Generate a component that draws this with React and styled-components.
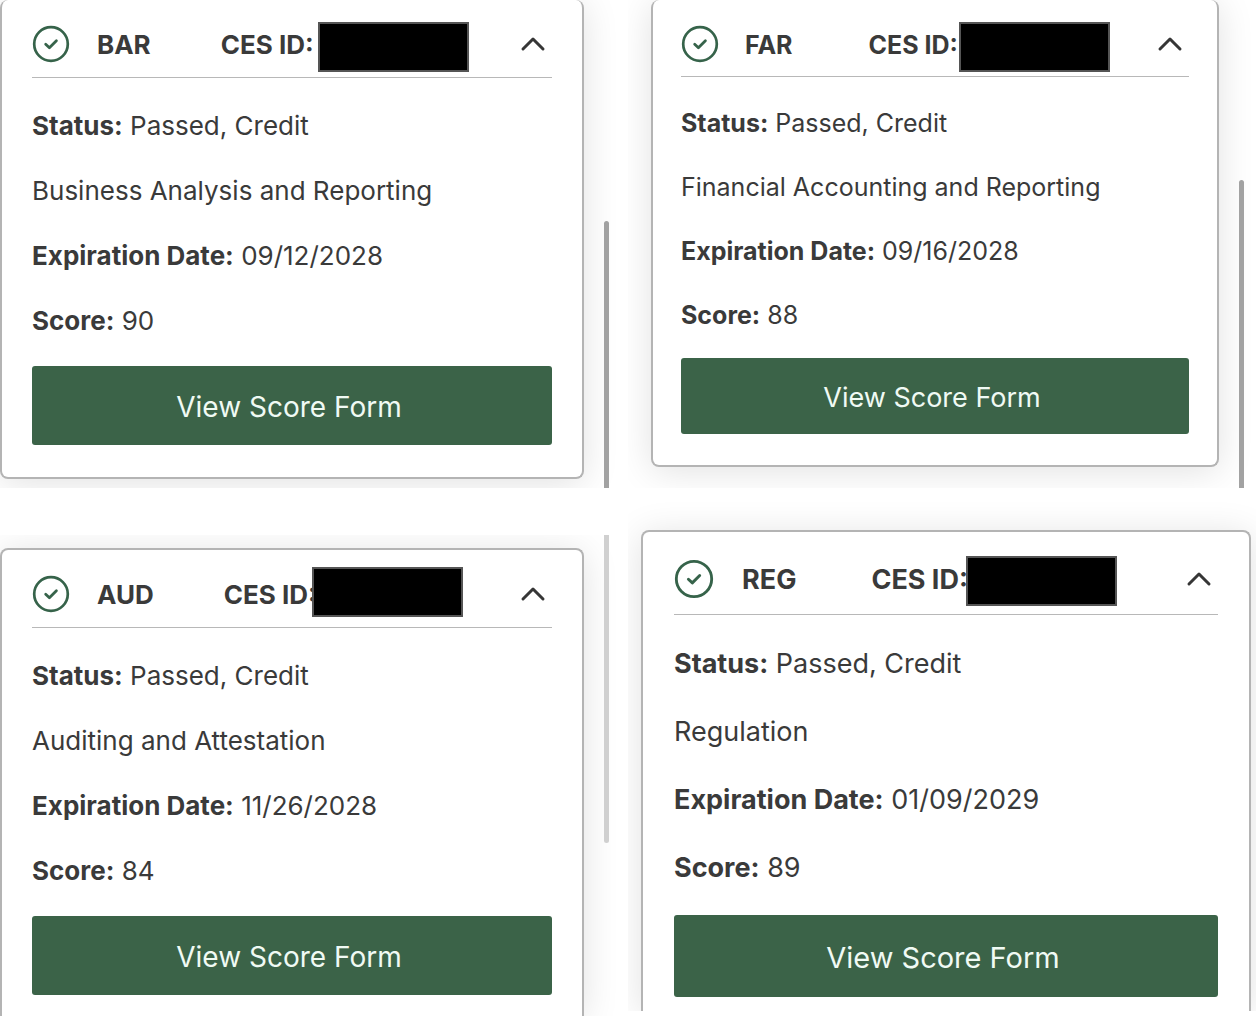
import React, { useState } from "react";
import styled, { createGlobalStyle } from "styled-components";

const GlobalStyle = createGlobalStyle`
  * {
    box-sizing: border-box;
  }

  body {
    margin: 0;
    background: #ffffff;
    color: #3a3a3a;
    font-family: Inter, "Liberation Sans", sans-serif;
  }
`;

// --- Card sizes ---
const sizes = {
  sm: {
    font: 25, line: 38, gap: 26, padX: 28, icon: 38, iconGap: 26, idGap: 76,
    headTop: 25, headBottom: 13, bodyTop: 27, buttonGap: 24, button: 76, buttonFont: 27, bottom: 31,
  },
  md: {
    font: 26, line: 39, gap: 26, padX: 30, icon: 38, iconGap: 27, idGap: 70,
    headTop: 25, headBottom: 14, bodyTop: 28, buttonGap: 26, button: 79, buttonFont: 28, bottom: 32,
  },
  lg: {
    font: 27, line: 41, gap: 27, padX: 31, icon: 40, iconGap: 28, idGap: 75,
    headTop: 27, headBottom: 15, bodyTop: 28, buttonGap: 27, button: 82, buttonFont: 29, bottom: 33,
  },
};

// --- Styled Components ---
const Page = styled.main`
  display: grid;
  grid-template-columns: 1fr 1fr;
  height: 100vh;
  min-height: 1016px;
  overflow: hidden;
`;

const Column = styled.div`
  display: flex;
  flex-direction: column;
  gap: ${(props) => props.$gap}px;
  min-width: 0;
  padding-bottom: ${(props) => props.$bottom || 0}px;
`;

const Pane = styled.section`
  display: flex;
  gap: 20px;
  flex: ${(props) => (props.$grow ? "1 1 0" : "none")};
  min-height: 0;
  overflow: hidden;
  padding: ${(props) => props.$padding};
`;

const Card = styled.article`
  flex: 1;
  min-width: 0;
  padding: 0 ${(props) => props.$size.padX}px;
  padding-bottom: ${(props) => props.$size.bottom}px;
  background: #ffffff;
  border: 2px solid #b4b4b4;
  border-radius: 8px;
  box-shadow: 0 4px 36px rgba(0, 0, 0, 0.12);
  font-size: ${(props) => props.$size.font}px;
  line-height: ${(props) => props.$size.line}px;

  ${(props) => props.$open === "top" && "border-top: 0;"}
  ${(props) =>
    props.$open === "bottom" &&
    "border-bottom: 0; border-bottom-left-radius: 0; border-bottom-right-radius: 0;"}
`;

const CardHeader = styled.header`
  position: relative;
  display: flex;
  align-items: center;
  padding-top: ${(props) => props.$size.headTop}px;
  padding-bottom: ${(props) => props.$size.headBottom}px;
  border-bottom: 1px solid #b8b8b8;
`;

const PassedIcon = styled.svg`
  flex: none;
  width: ${(props) => props.$size.icon}px;
  height: ${(props) => props.$size.icon}px;
  margin-right: ${(props) => props.$size.iconGap}px;
  fill: none;
  stroke: #36634a;
  stroke-linecap: round;
  stroke-linejoin: round;
`;

const Code = styled.h2`
  margin: 0;
  margin-right: ${(props) => props.$size.idGap}px;
  padding-top: 2px;
  font-size: inherit;
  font-weight: 650;
  line-height: 36px;
`;

const CesId = styled.span`
  padding-top: 2px;
  font-weight: 650;
  line-height: 36px;
  white-space: nowrap;
`;

/* Covers the candidate number, sits over the label */
const Redaction = styled.span`
  position: absolute;
  left: ${(props) => props.$left}px;
  top: ${(props) => props.$top}px;
  width: 151px;
  height: 50px;
  background: #000000;
  border: 2px solid #555555;
`;

const Toggle = styled.button`
  display: flex;
  margin-left: auto;
  padding: 6px;
  border: 0;
  background: none;
  cursor: pointer;

  svg {
    width: 26px;
    height: 16px;
    fill: none;
    stroke: #363636;
    stroke-width: 3;
    stroke-linecap: round;
    stroke-linejoin: round;
    transform: ${(props) => (props.$open ? "none" : "rotate(180deg)")};
  }
`;

const Details = styled.div`
  display: flex;
  flex-direction: column;
  gap: ${(props) => props.$size.gap}px;
  padding-top: ${(props) => props.$size.bodyTop}px;
`;

const Line = styled.p`
  margin: 0;

  strong {
    font-weight: 650;
  }
`;

const ScoreButton = styled.button`
  display: block;
  width: 100%;
  height: ${(props) => props.$size.button}px;
  margin-top: ${(props) => props.$size.buttonGap}px;
  padding: 2px 6px 0 0;
  border: 0;
  border-radius: 3px;
  background: #3b6348;
  color: #f0faf4;
  font-family: inherit;
  font-size: ${(props) => props.$size.buttonFont}px;
  cursor: pointer;
`;

const Thumb = styled.div`
  flex: none;
  width: 5px;
  height: ${(props) => props.$height}px;
  align-self: ${(props) => (props.$end ? "flex-end" : "flex-start")};
  background: ${(props) => (props.$end ? "#a2a2a2" : "#d0d0d0")};
  border-radius: ${(props) => (props.$end ? "3px 3px 0 0" : "0 0 3px 3px")};
`;

/* Runs the thumb down to the edge of the pane */
const Track = styled.div`
  display: flex;
  flex: none;
  margin-top: -${(props) => props.$top || 0}px;
  margin-bottom: -${(props) => props.$bottom || 0}px;
`;

// --- Score card ---
function ScoreCard({ exam, size, open }) {
  const [expanded, setExpanded] = useState(true);
  const s = sizes[size];

  return (
    <Card $size={s} $open={open}>
      <CardHeader $size={s}>
        <PassedIcon $size={s} viewBox="0 0 38 38" aria-hidden="true">
          <circle cx="19" cy="19" r="16.8" strokeWidth="2.7" />
          <path d="M13.7 19.2l3.7 3.5 7-7" strokeWidth="2.8" />
        </PassedIcon>
        <Code $size={s}>{exam.code}</Code>
        <CesId>CES ID:</CesId>
        <Redaction $left={exam.mark[0]} $top={exam.mark[1]} />
        <Toggle
          type="button"
          $open={expanded}
          aria-expanded={expanded}
          aria-label={`Toggle ${exam.code}`}
          onClick={() => setExpanded(!expanded)}
        >
          <svg viewBox="0 0 26 16">
            <path d="M3 13L13 3l10 10" />
          </svg>
        </Toggle>
      </CardHeader>
      {expanded && (
        <>
          <Details $size={s}>
            <Line>
              <strong>Status:</strong> Passed, Credit
            </Line>
            <Line>{exam.name}</Line>
            <Line>
              <strong>Expiration Date:</strong> {exam.expires}
            </Line>
            <Line>
              <strong>Score:</strong> {exam.score}
            </Line>
          </Details>
          <ScoreButton type="button" $size={s}>
            View Score Form
          </ScoreButton>
        </>
      )}
    </Card>
  );
}

// --- Data ---
const exams = {
  bar: { code: "BAR", name: "Business Analysis and Reporting", expires: "09/12/2028", score: 90, mark: [286, 22] },
  far: { code: "FAR", name: "Financial Accounting and Reporting", expires: "09/16/2028", score: 88, mark: [278, 22] },
  aud: { code: "AUD", name: "Auditing and Attestation", expires: "11/26/2028", score: 84, mark: [280, 17] },
  reg: { code: "REG", name: "Regulation", expires: "01/09/2029", score: 89, mark: [292, 24] },
};

export default function App() {
  return (
    <>
      <GlobalStyle />
      <Page>
        <Column $gap={47}>
          <Pane $padding="0 19px 9px 0">
            <ScoreCard exam={exams.bar} size="md" open="top" />
            <Track $bottom={9}>
              <Thumb $height={267} $end />
            </Track>
          </Pane>
          <Pane $grow $padding="13px 19px 0 0">
            <ScoreCard exam={exams.aud} size="md" open="bottom" />
            <Track $top={13}>
              <Thumb $height={308} />
            </Track>
          </Pane>
        </Column>
        <Column $gap={0} $bottom={5}>
          <Pane $padding="0 12px 21px 23px">
            <ScoreCard exam={exams.far} size="sm" open="top" />
            <Track $bottom={21}>
              <Thumb $height={308} $end />
            </Track>
          </Pane>
          <Pane $grow $padding="42px 5px 0 13px">
            <ScoreCard exam={exams.reg} size="lg" open="bottom" />
          </Pane>
        </Column>
      </Page>
    </>
  );
}
